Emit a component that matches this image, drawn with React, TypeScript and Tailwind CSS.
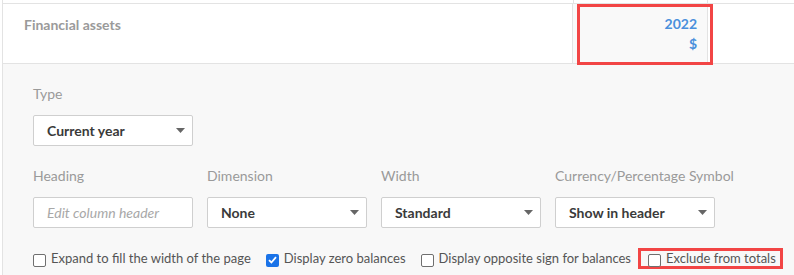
import React from "react";

const Caret = () => (
  <svg width="9" height="5" viewBox="0 0 9 5" className="shrink-0">
    <path d="M0 0 L9 0 L4.5 5 Z" fill="#666" />
  </svg>
);

function Select({ value }: { value: string }) {
  return (
    <div className="flex h-[31px] w-[160px] items-center justify-between rounded-[2px] border border-[#cfcfcf] bg-white pl-[13px] pr-[7px]">
      <span className="text-[14px] font-bold text-[#3a3a3a]">{value}</span>
      <Caret />
    </div>
  );
}

function Check({ checked, label }: { checked?: boolean; label: string }) {
  return (
    <label className="flex items-center gap-[5px]">
      {checked ? (
        <span className="mt-[3px] flex h-[13px] w-[13px] items-center justify-center rounded-[2px] bg-[#1a73e8]">
          <svg width="9" height="8" viewBox="0 0 9 8">
            <path d="M1 4.2 L3.4 6.5 L8 1.2" stroke="white" strokeWidth="1.8" fill="none" />
          </svg>
        </span>
      ) : (
        <span className="mt-[3px] h-[13px] w-[13px] rounded-[2px] border border-[#6f6f6f] bg-white" />
      )}
      <span className="text-[13px] text-[#555]">{label}</span>
    </label>
  );
}

function Field({ label, children }: { label: string; children: React.ReactNode }) {
  return (
    <div className="flex flex-col">
      <span className="text-[14px] leading-[17px] text-[#9a9a9a]">{label}</span>
      <div className="mt-[13px]">{children}</div>
    </div>
  );
}

export default function App() {
  return (
    <div className="h-[275px] w-[794px] overflow-hidden bg-white" style={{ fontFamily: "Lato, 'Open Sans', sans-serif" }}>
      {/* row above, mostly cut off */}
      <div className="flex h-[3px] pl-[2px]">
        <div className="w-[571px] border-l border-[#e3e3e3]" />
        <div className="w-[135px] border-l border-r border-[#e3e3e3]" />
      </div>
      <div className="ml-[2px] border-l border-t border-[#e3e3e3]">
        {/* header row */}
        <div className="relative flex h-[60px] border-b border-[#e3e3e3]">
          <div className="w-[570px] border-r border-[#e3e3e3] pl-[21px] pt-[10px] leading-[20px]">
            <span className="text-[14px] font-bold text-[#9a9a9a]">Financial assets</span>
          </div>
          <div className="flex w-[135px] flex-col items-end border-r border-[#e3e3e3] bg-[#f9f9f9] pr-[10px] pt-[10px] text-[14px] font-bold leading-[20px] text-[#4a90dc]">
            <span>2022</span>
            <span>$</span>
          </div>
          <div className="pointer-events-none absolute left-[574px] top-[0px] h-[61px] w-[136px] border-[3px] border-[#f24545]" />
        </div>

        {/* settings panel */}
        <div className="h-[211px] bg-[#f8f8f8] pl-[30px] pt-[21px]">
          <Field label="Type">
            <Select value="Current year" />
          </Field>

          <div className="mt-[21px] flex gap-[14px]">
            <Field label="Heading">
              <div className="flex h-[31px] w-[160px] items-center rounded-[2px] border border-[#cfcfcf] bg-white pl-[13px]">
                <span className="text-[14px] italic text-[#a8a8a8]">Edit column header</span>
              </div>
            </Field>
            <Field label="Dimension">
              <Select value="None" />
            </Field>
            <Field label="Width">
              <Select value="Standard" />
            </Field>
            <Field label="Currency/Percentage Symbol">
              <Select value="Show in header" />
            </Field>
          </div>

          <div className="mt-[20px] flex items-center gap-[15px]">
            <Check label="Expand to fill the width of the page" />
            <Check checked label="Display zero balances" />
            <Check label="Display opposite sign for balances" />
            <div className="-ml-[8px] flex h-[21px] items-center border-[3px] border-[#f24545] pl-[7px] pr-[4px]">
              <Check label="Exclude from totals" />
            </div>
          </div>
        </div>
      </div>
    </div>
  );
}
